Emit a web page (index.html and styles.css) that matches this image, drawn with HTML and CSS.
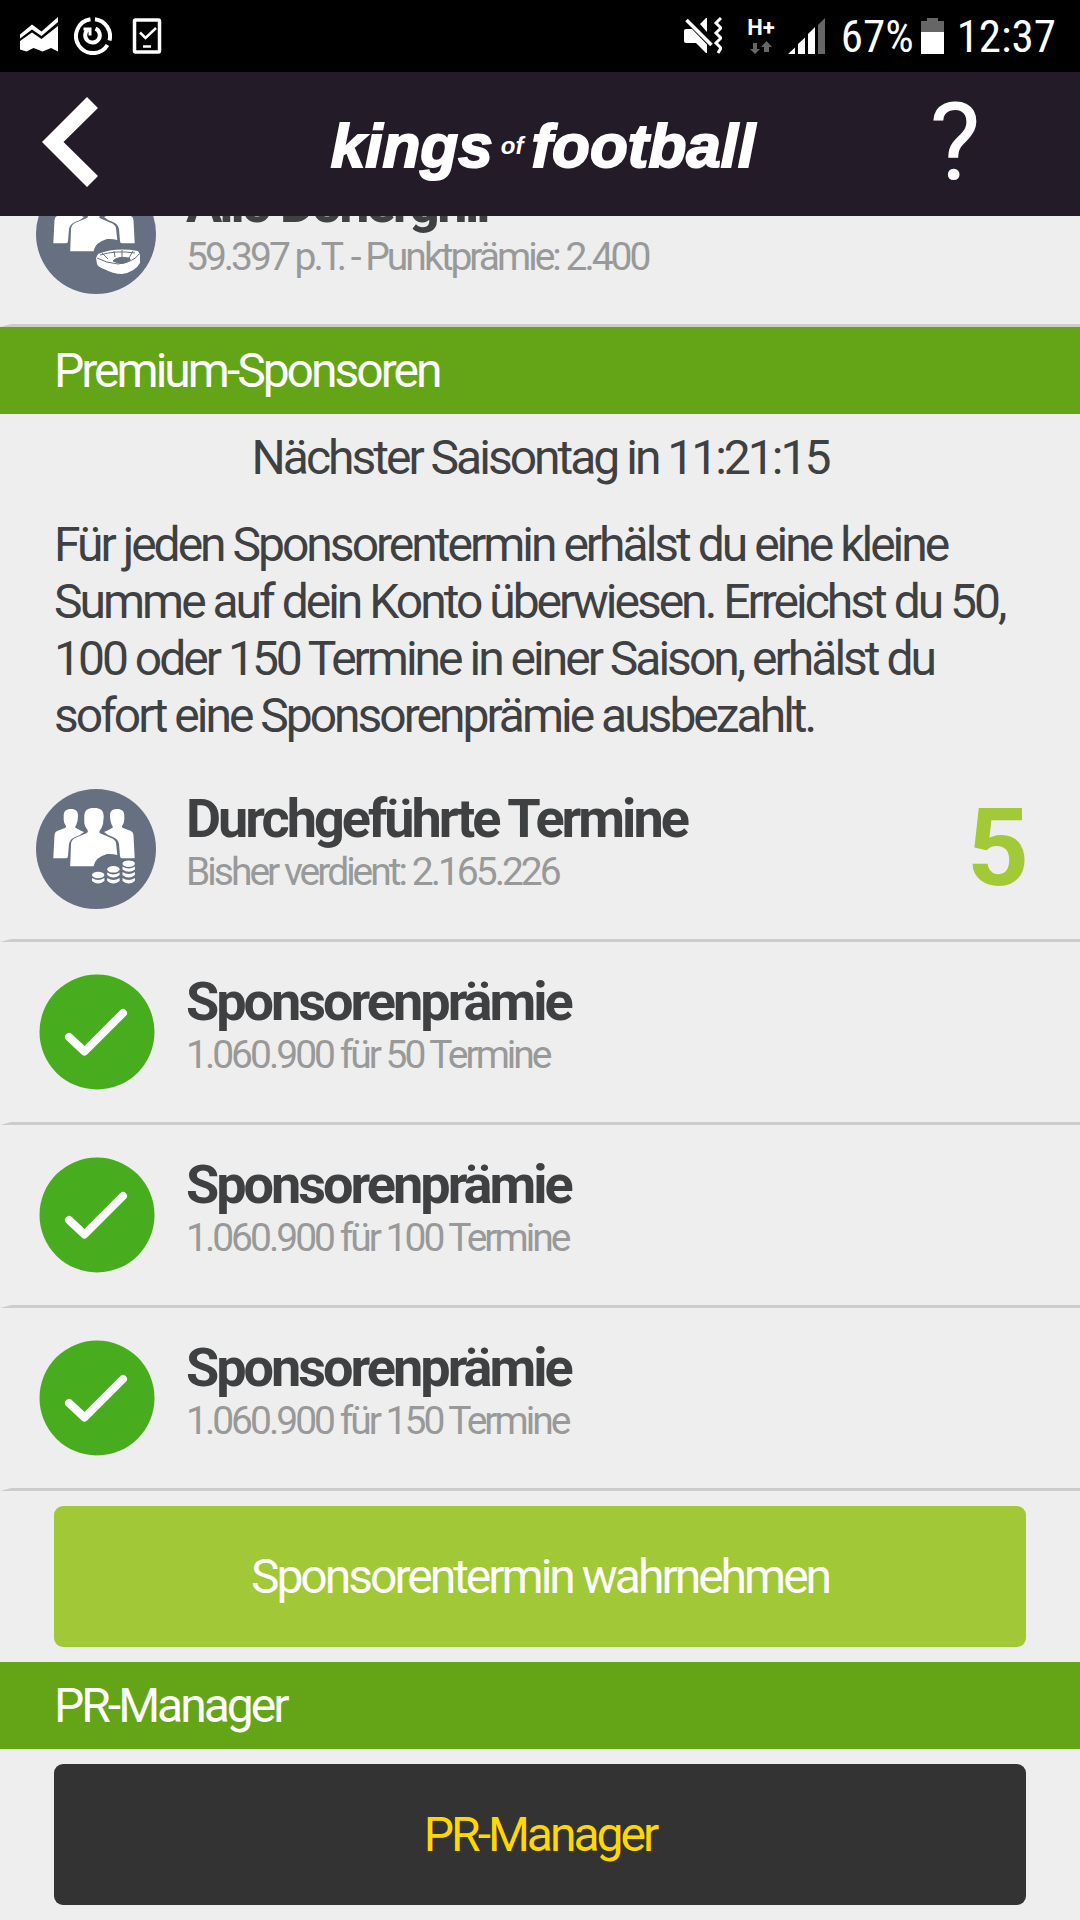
FILE: index.html
```html
<!DOCTYPE html>
<html lang="de">
<head>
<meta charset="utf-8">
<meta name="viewport" content="width=device-width, initial-scale=1">
<title>Kings of Football – Sponsoren</title>
<link rel="stylesheet" href="styles.css">
</head>
<body>
<svg class="sprite" aria-hidden="true">
  <symbol id="people" viewBox="0 0 120 120">
    <circle cx="60" cy="60" r="60" fill="#667080"/>
    <g fill="#fff">
      <path id="side" d="M27.700 27C27.700 22 30 20 35 20S42 22 42 27L41.500 32Q40.500 36 39 38Q40 39.500 48 43Q45 46 39 48Q34 50 33 55L32 67Q32 69.300 30 69.300H17.300L18.500 46Q18.800 43 21 42L29 39Q30.500 38 30 37Q27.700 34 27.700 31Z"/>
      <use href="#side" transform="matrix(-1 0 0 1 116 0)"/>
      <path d="M48.300 28C48.300 21.500 51 19 58 19S67.700 21.500 67.700 28L67 35Q65.500 40 63.500 42V44L74 48.500Q79.500 50.500 80 54L81.300 66Q76 64.500 71 65Q59.500 68 57.500 77.300H34.200L35 55Q35.500 50 40 48.500L51 44Q52.500 43 51.500 41Q48.300 37 48.300 34Z"/>
    </g>
  </symbol>
  <symbol id="check" viewBox="0 0 120 120">
    <circle cx="61" cy="60" r="57.500" fill="#47ad1e"/>
    <path d="M33 65L48.500 79.500L87 41" fill="none" stroke="#fff" stroke-width="8" stroke-linecap="round" stroke-linejoin="round"/>
  </symbol>
</svg>

<div class="statusbar">
  <div class="status-group status-left">
    <svg width="38" height="38" viewBox="0 0 38 38" fill="#fff"><path d="M0 17.500L12 7.500L21.500 14.500L38 0V5L21.500 19L12 12.500L0 21.500ZM0 24L12 15.500L21.500 22L38 9V34.500L31 31L22.500 34.500L13.500 31L6.500 34.500L0 32.500Z"/></svg>
    <svg width="38" height="38" viewBox="0 0 38 38" fill="none" stroke="#fff"><path d="M16.500 2.300A17 17 0 1 0 33.500 28" stroke-width="4"/><path d="M21 2.300A17 17 0 0 1 35.500 23.500" stroke-width="4"/><path d="M14 12.500A7.300 7.300 0 1 0 21.500 11.600" stroke-width="4"/><path d="M9.500 12H16V18.500" stroke-width="3"/></svg>
    <svg width="38" height="38" viewBox="0 0 38 38" fill="none" stroke="#fff"><rect x="6.500" y="3" width="25" height="32" rx="1" stroke-width="3.500"/><path d="M12 15.500L17.500 21L28 11" stroke-width="2.500"/><path d="M15 29.500H23" stroke-width="2.500"/></svg>
  </div>
  <div class="status-group status-right">
    <svg width="38" height="38" viewBox="0 0 38 38"><path d="M2 12H8L23 27.500V36H22L12 26H2Q0 26 0 24V14Q0 12 2 12ZM16 7L22 1H23V15Z" fill="#fff"/><path d="M2.500 3L27.500 28" stroke="#fff" stroke-width="3.500"/><path d="M37 1L32 6L37 11L32 16L37 21L32 26L37 31L34 36" fill="none" stroke="#fff" stroke-width="3"/></svg>
    <div class="network"><span>H+</span><svg width="24" height="13" viewBox="0 0 24 13" fill="#666"><path d="M4 2H8V8H11L6 13L1 8H4ZM15 11H20V6H23L17.500 0L12 6H15Z"/></svg></div>
    <svg class="signal" width="37" height="37" viewBox="0 0 37 37"><path d="M0 36L7 29.500V36ZM10 26L17 19.500V36H10ZM20 16L27 9V36H20Z" fill="#fff"/><path d="M30 7L37 0V36H30Z" fill="#666"/></svg>
    <span class="battery-level">67%</span>
    <svg width="23" height="36" viewBox="0 0 23 36"><path d="M0 3H6V0H17V3H23V14H0Z" fill="#666"/><path d="M0 14H23V36H0Z" fill="#fff"/></svg>
    <time class="clock">12:37</time>
  </div>
</div>

<header class="topbar">
  <button class="back" type="button" aria-label="Zurück"><svg width="56" height="90" viewBox="0 0 56 90"><path d="M0 45L45 0L56 11L21.500 45L56 79L45 90Z" fill="#fff"/></svg></button>
  <h1 class="logo"><span>kings</span><small>of</small><span>football</span></h1>
  <button class="help" type="button" aria-label="Hilfe">?</button>
</header>

<main class="content">
  <ul class="rows scrolled">
    <li class="row">
      <svg class="row-icon" viewBox="0 0 120 120"><use href="#people"/>
        <path d="M59 74Q64 66 75 66Q82 66 84 70V78H104V101H59Z" fill="#667080"/>
        <path d="M60 84L62 80Q80 73 102 77L104 81V89Q99 98 86 100Q77 100 68 95Q62 93 61 90Z" fill="#fff"/>
        <path d="M61 84Q70 89 82 90Q98 88 103 80M64 81Q80 76 99 79M77 87Q81 82 93 84Q97 86 88 89Q82 90 77 87ZM66 79L72 85M78 77L79 83M86 76V83M97 77L93 84" fill="none" stroke="#667080" stroke-width="1"/>
        <path d="M77 87Q81 82 93 84Q97 86 88 89Q82 90 77 87Z" fill="#667080"/>
      </svg>
      <div class="row-text"><h3>Allo Dönergrill</h3><p>59.397 p.T. - Punktprämie: 2.400</p></div>
    </li>
  </ul>

  <section>
    <h2 class="section-title">Premium-Sponsoren</h2>
    <p class="countdown">Nächster Saisontag in 11:21:15</p>
    <p class="intro">Für jeden Sponsorentermin erhälst du eine kleine Summe auf dein Konto überwiesen. Erreichst du 50, 100 oder 150 Termine in einer Saison, erhälst du sofort eine Sponsorenprämie ausbezahlt.</p>
    <ul class="rows">
      <li class="row">
        <svg class="row-icon" viewBox="0 0 120 120"><use href="#people"/>
          <g fill="#fff">
            <ellipse cx="62.200" cy="86" rx="6.200" ry="3.300"/><path d="M56 89Q62 93 68.400 89V92Q62 97 56 92Z"/>
            <ellipse cx="77.400" cy="80.300" rx="6.200" ry="3.300"/><path d="M71.200 83.500Q77.400 87.500 83.600 83.500V86Q77.400 91 71.200 86ZM71.200 89Q77.400 93 83.600 89V92Q77.400 97 71.200 92Z"/>
            <ellipse cx="92.700" cy="74.700" rx="6.200" ry="3.300"/><path d="M86.500 77.500Q92.700 81.500 98.900 77.500V80.500Q92.700 85 86.500 80.500ZM86.500 83Q92.700 87 98.900 83V86Q92.700 91 86.500 86ZM86.500 89Q92.700 93 98.900 89V92Q92.700 97 86.500 92Z"/>
          </g>
        </svg>
        <div class="row-text"><h3>Durchgeführte Termine</h3><p>Bisher verdient: 2.165.226</p></div>
        <strong class="row-count">5</strong>
      </li>
      <li class="row">
        <svg class="row-icon"><use href="#check"/></svg>
        <div class="row-text"><h3>Sponsorenprämie</h3><p>1.060.900 für 50 Termine</p></div>
      </li>
      <li class="row">
        <svg class="row-icon"><use href="#check"/></svg>
        <div class="row-text"><h3>Sponsorenprämie</h3><p>1.060.900 für 100 Termine</p></div>
      </li>
      <li class="row">
        <svg class="row-icon"><use href="#check"/></svg>
        <div class="row-text"><h3>Sponsorenprämie</h3><p>1.060.900 für 150 Termine</p></div>
      </li>
    </ul>
    <div class="action"><button class="button" type="button">Sponsorentermin wahrnehmen</button></div>
  </section>

  <section>
    <h2 class="section-title">PR-Manager</h2>
    <div class="action"><button class="button button-dark" type="button">PR-Manager</button></div>
  </section>
</main>
</body>
</html>
```

FILE: styles.css
```css
* {
  box-sizing: border-box;
  margin: 0;
  padding: 0;
}

body {
  background: #eee;
  color: #3e4042;
  font-family: Roboto, sans-serif;
  font-size: 48px;
  line-height: 57px;
}

button {
  border: 0;
  background: none;
  color: inherit;
  font: inherit;
  letter-spacing: inherit;
}

ul {
  list-style: none;
}

svg {
  display: block;
  flex: none;
}

.sprite {
  position: absolute;
  width: 0;
  height: 0;
}

/* Device status bar */
.statusbar {
  display: flex;
  justify-content: space-between;
  align-items: center;
  height: 72px;
  padding: 0 24px 0 20px;
  background: #000;
  color: #fff;
}

.status-group {
  display: flex;
  align-items: center;
}

.status-left {
  gap: 16px;
}

.status-right {
  gap: 13px;
  font-family: "Roboto Condensed", "Liberation Sans Narrow", Roboto, sans-serif;
  font-size: 45px;
}

.network {
  display: flex;
  flex-direction: column;
  align-items: center;
  gap: 4px;
  margin-left: 12px;
  font: bold 22px/18px Roboto, sans-serif;
}

.signal {
  margin-right: 3px;
}

.battery-level {
  margin-right: -6px;
}

/* App header */
.topbar {
  position: relative;
  z-index: 1;
  display: grid;
  grid-template-columns: 250px 1fr 250px;
  align-items: center;
  height: 144px;
  background: #241b29;
  color: #fff;
}

.back {
  justify-self: start;
  padding: 0 42px 4px;
}

.help {
  padding-bottom: 4px;
  font-size: 108px;
  line-height: 140px;
}

.logo {
  display: flex;
  justify-content: center;
  align-items: baseline;
  gap: 8px;
  padding: 4px 0 0 6px;
  font: italic bold 62px/72px "Liberation Sans", Arial, sans-serif;
  -webkit-text-stroke: 2px #fff;
}

.logo small {
  align-self: center;
  font-size: 24px;
  line-height: 24px;
  -webkit-text-stroke: 0;
}

/* Content */
.content {
  overflow: hidden;
  letter-spacing: -3px;
}

.scrolled {
  margin-top: -72px;
}

.section-title {
  padding: 15px 54px;
  background: #64a517;
  color: #fff;
  font-size: 48px;
  font-weight: 400;
}

.countdown {
  padding: 15px 54px;
  text-align: center;
}

.intro {
  padding: 15px 54px;
}

.row {
  display: flex;
  align-items: flex-start;
  gap: 30px;
  height: 183px;
  padding: 30px 54px 0 25px;
  border-bottom: 3px solid #ccc;
  border-left: 11px solid transparent;
}

.row-icon {
  width: 120px;
  height: 120px;
}

.row-text {
  flex: 1;
}

.row-text h3 {
  font-size: 54px;
  line-height: 60px;
}

.row-text p {
  color: #999;
  font-size: 39px;
  line-height: 46px;
}

.row-count {
  color: #a1c938;
  font-size: 108px;
  line-height: 118px;
}

.action {
  padding: 15px 54px;
}

.button {
  width: 100%;
  padding: 42px 24px;
  border-radius: 9px;
  background: #a0c837;
  color: #fff;
}

.button-dark {
  background: #333;
  color: #ffd800;
}
```
